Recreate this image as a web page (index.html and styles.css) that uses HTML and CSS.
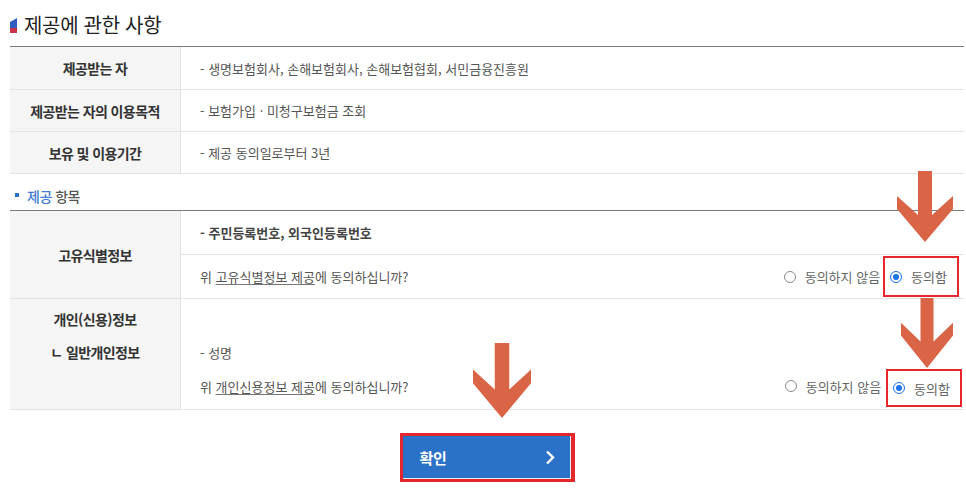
FILE: index.html
```html
<!DOCTYPE html>
<html lang="ko">
<head>
<meta charset="utf-8">
<title>제공에 관한 사항</title>
<link rel="stylesheet" href="styles.css">
</head>
<body>
<div class="page">
  <h2 class="title">
    <svg class="title-icon" width="7" height="16" viewBox="0 0 7 16" aria-hidden="true">
      <polygon points="0,5 7,1 7,11 0,11" fill="#2f5fc0"/>
      <polygon points="0,11 7,11 7,16 0,16" fill="#c9344a"/>
    </svg>
    <span>제공에 관한 사항</span>
  </h2>

  <div class="grid-table">
    <div class="row r1">
      <div class="th">제공받는 자</div>
      <div class="td">- 생명보험회사, 손해보험회사, 손해보험협회, 서민금융진흥원</div>
    </div>
    <div class="row r2">
      <div class="th">제공받는 자의 이용목적</div>
      <div class="td">- 보험가입 · 미청구보험금 조회</div>
    </div>
    <div class="row r2">
      <div class="th">보유 및 이용기간</div>
      <div class="td">- 제공 동의일로부터 3년</div>
    </div>
  </div>

  <div class="sub-title"><span class="sq"></span><span class="blue">제공</span>&nbsp;항목</div>

  <div class="grid-table">
    <div class="row rowa">
      <div class="th th-center">고유식별정보</div>
      <div class="td-stack">
        <div class="sub sub-top"><span class="strong">- 주민등록번호, 외국인등록번호</span></div>
        <div class="sub sub-bottom">
          <span class="q">위 <u>고유식별정보 제공</u>에 동의하십니까?</span>
          <div class="choices">
            <span class="choice"><span class="radio"></span>동의하지 않음</span>
            <span class="choice mark mark-a"><span class="radio on"></span>동의함</span>
          </div>
        </div>
      </div>
    </div>
    <div class="row rowb">
      <div class="th th-lines">개인(신용)정보<br>ㄴ 일반개인정보<br>&nbsp;</div>
      <div class="td-lines">
        <div class="line">- 성명</div>
        <div class="line line-q">
          <span class="q">위 <u>개인신용정보 제공</u>에 동의하십니까?</span>
          <div class="choices">
            <span class="choice"><span class="radio"></span>동의하지 않음</span>
            <span class="choice mark mark-b"><span class="radio on"></span>동의함</span>
          </div>
        </div>
      </div>
    </div>
  </div>

  <div class="btn-wrap">
    <div class="btn-frame">
      <button class="btn" type="button">
        <span>확인</span>
        <svg width="10" height="15" viewBox="0 0 10 15" aria-hidden="true">
          <polyline points="2,1.5 8,7.5 2,13.5" fill="none" stroke="#fff" stroke-width="2.4"/>
        </svg>
      </button>
    </div>
  </div>

  <svg class="arrow arrow-1" viewBox="0 0 56 71" preserveAspectRatio="none" aria-hidden="true">
    <polygon points="21,0 35,0 35,44 56,25 56,38 28,71 0,38 0,25 21,44" fill="#d96446"/>
  </svg>
  <svg class="arrow arrow-2" viewBox="0 0 56 71" preserveAspectRatio="none" aria-hidden="true">
    <polygon points="21,0 35,0 35,44 56,25 56,38 28,71 0,38 0,25 21,44" fill="#d96446"/>
  </svg>
  <svg class="arrow arrow-3" viewBox="0 0 56 71" preserveAspectRatio="none" aria-hidden="true">
    <polygon points="21,0 35,0 35,44 56,25 56,38 28,71 0,38 0,25 21,44" fill="#d96446"/>
  </svg>
</div>
</body>
</html>
```

FILE: styles.css
```css
* { box-sizing: border-box; }

html, body {
  margin: 0;
  padding: 0;
  background: #fff;
}

body {
  font-family: "Noto Sans CJK KR", "Noto Sans", sans-serif;
  color: #555;
  width: 966px;
  height: 493px;
  overflow: hidden;
}

.page {
  position: relative;
  padding: 12px 2px 0 10px;
  width: 966px;
}

.title {
  display: flex;
  align-items: center;
  gap: 7px;
  margin: 0 0 8px 0;
  height: 26px;
  font-size: 20px;
  font-weight: 400;
  letter-spacing: -0.3px;
  color: #222;
  line-height: 26px;
}

.title-icon { display: block; }

.grid-table {
  border-top: 1px solid #7a7a7a;
}

.row {
  display: grid;
  grid-template-columns: 171px 1fr;
  border-bottom: 1px solid #e4e4e4;
}

.r1 { height: 43px; }
.r2 { height: 42px; }

.th {
  background: #f5f5f5;
  border-right: 1px solid #e2e2e2;
  display: flex;
  align-items: center;
  justify-content: center;
  font-size: 14px;
  font-weight: 700;
  letter-spacing: -0.6px;
  color: #333;
}

.td {
  display: flex;
  align-items: center;
  padding-left: 19px;
  font-size: 13px;
  color: #555;
}

.sub-title {
  display: flex;
  align-items: center;
  margin: 12px 0 4px 0;
  height: 20px;
  padding-left: 5px;
  font-size: 14px;
  font-weight: 500;
  letter-spacing: -0.5px;
  color: #555;
}

.sq {
  width: 4px;
  height: 4px;
  background: #2b6fc8;
  margin-right: 8px;
  margin-top: -2px;
}

.blue { color: #3f7cd0; }

.rowa { height: 88px; }

.td-stack {
  display: flex;
  flex-direction: column;
}

.sub {
  display: flex;
  align-items: center;
  padding-left: 19px;
  font-size: 13px;
  color: #555;
}

.sub-top {
  height: 44px;
  border-bottom: 1px solid #e4e4e4;
}

.sub-bottom {
  height: 43px;
  justify-content: space-between;
}

.strong {
  font-weight: 600;
  color: #444;
}

.q u {
  text-decoration-color: #777;
  text-underline-offset: 2px;
}

.choices {
  display: flex;
  align-items: center;
  font-size: 13px;
  color: #666;
}

.choice {
  display: flex;
  align-items: center;
  gap: 9px;
}

.radio {
  width: 12px;
  height: 12px;
  border-radius: 50%;
  border: 1px solid #8a8a8a;
  background: #fff;
  display: inline-block;
  position: relative;
}

.radio.on {
  border-color: #1a73e8;
}

.radio.on::after {
  content: "";
  position: absolute;
  left: 2px;
  top: 2px;
  width: 6px;
  height: 6px;
  border-radius: 50%;
  background: #1a73e8;
}

.mark {
  border: 2px solid #e8262e;
  padding: 0 10px 0 5px;
}

.mark-a {
  height: 41px;
  margin-left: 3px;
  margin-right: 5px;
}

.mark-b {
  height: 38px;
  margin-left: 5px;
  margin-right: 2px;
  margin-top: 4px;
}

.rowb { height: 111px; }

.th-lines {
  display: block;
  padding-top: 4px;
  line-height: 33px;
  text-align: center;
}

.td-lines {
  display: flex;
  flex-direction: column;
  padding: 37px 0 0 19px;
  font-size: 13px;
  color: #555;
}

.line {
  height: 32px;
  display: flex;
  align-items: center;
}

.line-q {
  margin-top: 2px;
  justify-content: space-between;
}

.btn-wrap {
  display: flex;
  justify-content: center;
  margin-top: 23px;
}

.btn-frame {
  border: 3px solid #e4262d;
  width: 175px;
  height: 49px;
  border-right-width: 4px;
}

.btn {
  width: 100%;
  height: 100%;
  border: 0;
  border-right: 1px solid #e9eef6;
  border-bottom: 1px solid #e9eef6;
  background: #2a71c7;
  color: #fff;
  font-family: "Noto Sans CJK KR", "Noto Sans", sans-serif;
  font-size: 15px;
  font-weight: 700;
  letter-spacing: -0.3px;
  display: flex;
  align-items: center;
  justify-content: space-between;
  padding: 0 15px 0 17px;
  cursor: pointer;
}

.btn svg { display: block; }

.arrow {
  position: absolute;
  display: block;
}

.arrow-1 { left: 897px; top: 171px; width: 56px; height: 71px; }
.arrow-2 { left: 901px; top: 298px; width: 52px; height: 70px; }
.arrow-3 { left: 473px; top: 343px; width: 58px; height: 75px; }
```
